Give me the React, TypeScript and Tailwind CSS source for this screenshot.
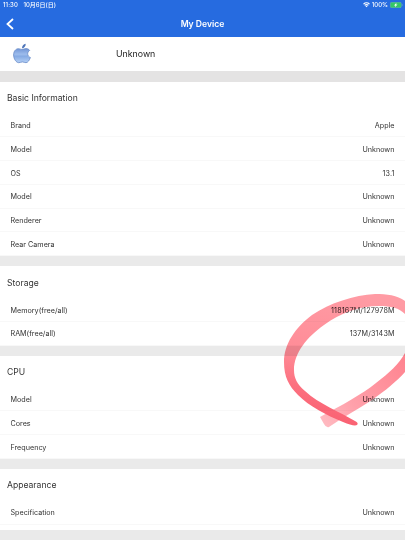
import React from "react";

type Row = { label: string; value: string };

const sections: { title: string; rows: Row[] }[] = [
    {
        title: "Basic Information",
        rows: [
            { label: "Brand", value: "Apple" },
            { label: "Model", value: "Unknown" },
            { label: "OS", value: "13.1" },
            { label: "Model", value: "Unknown" },
            { label: "Renderer", value: "Unknown" },
            { label: "Rear Camera", value: "Unknown" },
        ],
    },
    {
        title: "Storage",
        rows: [
            { label: "Memory(free/all)", value: "118167M/127978M" },
            { label: "RAM(free/all)", value: "137M/3143M" },
        ],
    },
    {
        title: "CPU",
        rows: [
            { label: "Model", value: "Unknown" },
            { label: "Cores", value: "Unknown" },
            { label: "Frequency", value: "Unknown" },
        ],
    },
    {
        title: "Appearance",
        rows: [{ label: "Specification", value: "Unknown" }],
    },
];

function StatusBar() {
    return (
        <div className="flex h-[10px] items-center justify-between pl-[3px] pr-[2px] text-[6px] leading-none font-medium">
            <div className="flex gap-[5.5px]">
                <span className="tracking-[0.1px]">11:30</span>
                <span>10月6日(日)</span>
            </div>
            <div className="flex items-center gap-[2px]">
                <svg viewBox="0 0 14 11" className="h-[5.5px] w-[7px]" fill="none" stroke="white" strokeWidth="2.2">
                    <path d="M1 4.2a8.5 8.5 0 0 1 12 0M3.4 6.8a5 5 0 0 1 7.2 0" />
                    <path d="M7 10.6 4.9 8.5a3 3 0 0 1 4.2 0z" fill="white" stroke="none" />
                </svg>
                <span>100%</span>
                <svg viewBox="0 0 26 12" className="h-[6px] w-[13px]">
                    <rect x="0.5" y="0.5" width="22" height="11" rx="3" fill="#34c766" stroke="#77b9b0" />
                    <path d="M24 4v4c1.6-.6 1.6-3.4 0-4z" fill="#77b9b0" />
                    <path d="M13 1.5 8 6.8h3L9.8 10.5l5.2-5.3h-3z" fill="white" />
                </svg>
            </div>
        </div>
    );
}

function AppleLogo() {
    return (
        <svg viewBox="0 0 18 21" className="mb-px h-[21px] w-[18px]">
            <defs>
                <linearGradient id="apple" x1="0" y1="0" x2="0" y2="1">
                    <stop offset="0" stopColor="#7195d6" />
                    <stop offset="0.4" stopColor="#9dbcec" />
                    <stop offset="0.55" stopColor="#86abe4" />
                    <stop offset="1" stopColor="#b5d0f5" />
                </linearGradient>
            </defs>
            <path
                d="M9 6.5c1.2 0 2.2-.9 4-.9 1.5 0 2.9.7 3.7 1.8-3 1.8-2.6 5.8.7 7.1-.9 2.6-2.6 5.2-4.4 5.2-1.4 0-2-.8-3.6-.8s-2.2.8-3.6.8C3.2 19.7.6 15.8.6 12c0-3.9 2.3-6.3 4.8-6.3 1.6 0 2.6.8 3.6.8z"
                fill="url(#apple)"
                stroke="#6a8bc8"
                strokeWidth="0.8"
            />
            <path d="M9 5.3C8.8 3 10.6 1 12.7.7 12.9 3.1 11.2 5.1 9 5.3z" fill="#4f75b8" />
        </svg>
    );
}

// Freehand highlighter loop drawn over the page
function MarkerLoop() {
    return (
        <svg viewBox="0 0 405 540" className="pointer-events-none absolute inset-0 h-[540px] w-[405px] mix-blend-multiply">
            <defs>
                <linearGradient id="loop" gradientUnits="userSpaceOnUse" x1="350" y1="294" x2="325" y2="425">
                    <stop offset="0" stopColor="#ff9ba4" />
                    <stop offset="0.5" stopColor="#ff8c97" />
                    <stop offset="0.75" stopColor="#fc7180" />
                    <stop offset="1" stopColor="#f95f70" />
                </linearGradient>
                <linearGradient id="start" gradientUnits="userSpaceOnUse" x1="322" y1="423" x2="405" y2="360">
                    <stop offset="0" stopColor="#ffbac1" />
                    <stop offset="0.35" stopColor="#ffa0aa" />
                    <stop offset="1" stopColor="#ff8490" />
                </linearGradient>
            </defs>
            <path
                d="M320 417C342 405 361 395 376 383C389 373 399 364 405 353V372C396 382 386 390 372 400C357 410 343 417 329 427Q326 428 324 424Z"
                fill="url(#start)"
            />
            <path
                d="M405 301C397 295 387 294 375 294C354 295 330 303 312 315C295 328 284 344 284 362C284 377 289 386 298 395C309 406 326 415 343 422C350 425 355 426 357 425Q359 423 355 421C340 412 319 404 305 391C297 384 294 378 294 370C294 353 307 337 324 325C340 313 360 306 379 306C391 306 399 308 405 314Z"
                fill="url(#loop)"
            />
        </svg>
    );
}

export default function App() {
    return (
        <div className="relative h-[540px] w-[405px] overflow-hidden bg-[#eaeaea] font-['Inter','Noto_Sans_CJK_JP',sans-serif] text-[#333]">
            <header className="h-[37px] bg-[#266be0] text-white">
                <StatusBar />
                <div className="grid h-[27px] grid-cols-3 items-center px-[6px]">
                    <svg viewBox="0 0 8 12" className="h-[12px] w-[8px]" fill="none" stroke="white" strokeWidth="1.8">
                        <path d="M7 1 1.5 6 7 11" />
                    </svg>
                    <h1 className="pt-px text-center text-[8.6px] leading-none font-semibold">My Device</h1>
                </div>
            </header>

            <div className="flex h-[34px] items-center bg-white pl-[13px]">
                <AppleLogo />
                <span className="ml-[85px] text-[8.8px] leading-none text-[#222]">Unknown</span>
            </div>
            <div className="h-[11px] bg-[#e4e3e3]" />

            <main className="flex flex-col gap-[10.3px]">
                {sections.map((section) => (
                    <section key={section.title} className="bg-white last:pb-[5px]">
                        <h2 className="flex h-[31.7px] items-center pt-[1px] pl-[7px] text-[8.6px] leading-none">
                            {section.title}
                        </h2>
                        {section.rows.map((row, i) => (
                            <div
                                key={i}
                                className="flex h-[23.75px] items-center justify-between border-b border-[#f8f8f8] pt-[1.5px] pr-[10.5px] pl-[10.5px] text-[7.2px] leading-none"
                            >
                                <span>{row.label}</span>
                                <span className={/\d/.test(row.value) ? "-mr-[0.15px] tracking-[0.15px]" : ""}>
                                    {row.value}
                                </span>
                            </div>
                        ))}
                    </section>
                ))}
            </main>

            <MarkerLoop />
        </div>
    );
}
